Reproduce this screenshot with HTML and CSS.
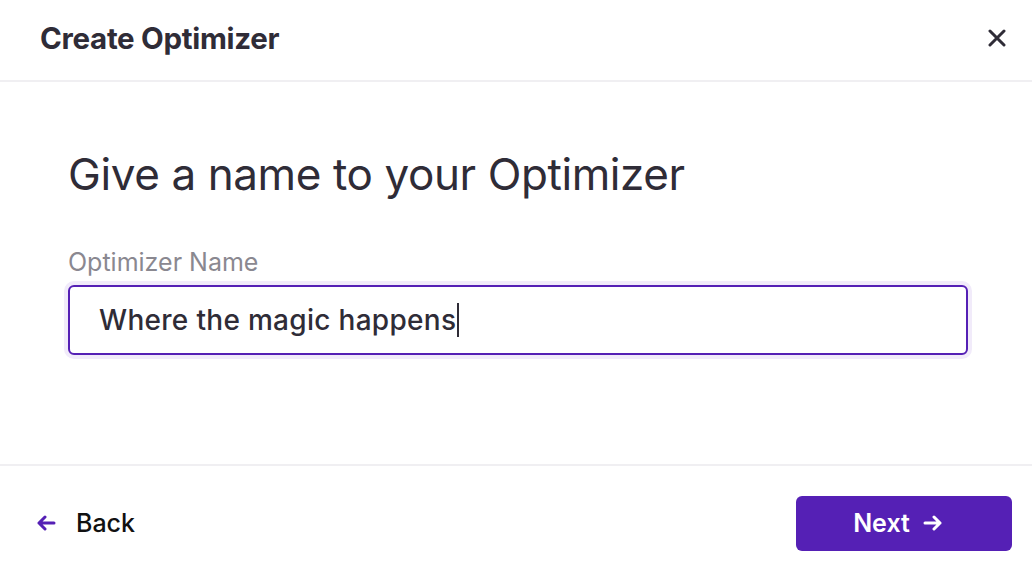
FILE: index.html
```html
<!DOCTYPE html>
<html lang="en">
<head>
  <meta charset="UTF-8">
  <title>Create Optimizer</title>
  <meta name="viewport" content="width=device-width, initial-scale=1">
  <link rel="stylesheet" href="styles.css">
</head>
<body>
  <div class="modal">
    <div class="modal-header">
      <h1 class="modal-title">Create Optimizer</h1>
      <button class="close-btn" aria-label="Close">
        <svg width="18" height="18" viewBox="0 0 18 18"><path d="M2 2L16 16M16 2L2 16" stroke="#2f2c37" stroke-width="3" stroke-linecap="round"/></svg>
      </button>
    </div>
    <div class="modal-body">
      <h2 class="step-title">Give a name to your Optimizer</h2>
      <label class="field-label" for="name">Optimizer Name</label>
      <div class="field-ring">
        <div class="field" id="name">Where the magic happens<span class="caret"></span></div>
      </div>
    </div>
    <div class="modal-footer">
      <button class="back-btn">
        <svg width="20" height="16" viewBox="0 0 20 16"><path d="M18 8H3M9 2L3 8L9 14" fill="none" stroke="#5520b5" stroke-width="3" stroke-linecap="round" stroke-linejoin="round"/></svg>
        <span>Back</span>
      </button>
      <button class="next-btn">
        <span>Next</span>
        <svg width="20" height="16" viewBox="0 0 20 16"><path d="M2 8H17M11 2L17 8L11 14" fill="none" stroke="#fff" stroke-width="3" stroke-linecap="round" stroke-linejoin="round"/></svg>
      </button>
    </div>
  </div>
</body>
</html>
```

FILE: styles.css
```css
body {
  margin: 0;
  background: #fff;
  font-family: Inter, "Noto Sans", sans-serif;
  color: #2f2c37;
}
.modal {
  width: 1032px;
  height: 580px;
  display: flex;
  flex-direction: column;
}
.modal-header {
  height: 82px;
  flex-shrink: 0;
  box-sizing: border-box;
  display: flex;
  align-items: center;
  justify-content: space-between;
  padding: 0 26px 4px 40px;
  border-bottom: 2px solid #f0eff2;
}
.modal-title {
  margin: 0;
  font-size: 29.5px;
  font-weight: 700;
  letter-spacing: -0.3px;
}
.close-btn {
  border: none;
  background: none;
  padding: 0;
  display: flex;
  cursor: pointer;
}
.modal-body {
  flex: 1;
  padding: 66px 64px 0 68px;
}
.step-title {
  margin: 0;
  font-size: 44px;
  line-height: 52px;
  font-weight: 400;
  letter-spacing: -0.4px;
}
.field-label {
  display: block;
  margin-top: 47px;
  font-size: 25px;
  line-height: 30px;
  color: #8a8890;
}
.field-ring {
  margin: 4px -4px 0;
  padding: 4px;
  border-radius: 10px;
  background: #f1ebfa;
}
.field {
  box-sizing: border-box;
  height: 70px;
  border: 2px solid #5520b5;
  border-radius: 6px;
  background: #fff;
  padding: 0 29px;
  display: flex;
  align-items: center;
  font-size: 28px;
  letter-spacing: 0.3px;
  font-weight: 500;
  color: #2f2c37;
}
.caret {
  display: inline-block;
  width: 1.5px;
  height: 34px;
  background: #2f2c37;
  margin-left: 1px;
}
.modal-footer {
  height: 114px;
  flex-shrink: 0;
  border-top: 2px solid #f0eff2;
  display: flex;
  align-items: center;
  justify-content: space-between;
  padding: 0 20px 0 36px;
}
.back-btn {
  border: none;
  background: none;
  padding: 0;
  display: flex;
  align-items: center;
  gap: 20px;
  font-family: inherit;
  font-size: 25px;
  font-weight: 500;
  color: #111;
  cursor: pointer;
}
.next-btn {
  width: 216px;
  height: 55px;
  border: none;
  border-radius: 6px;
  background: #5520b5;
  color: #fff;
  font-family: inherit;
  font-size: 25px;
  font-weight: 600;
  display: flex;
  align-items: center;
  justify-content: center;
  gap: 13px;
  padding: 0 12px 0 0;
  cursor: pointer;
}
```
